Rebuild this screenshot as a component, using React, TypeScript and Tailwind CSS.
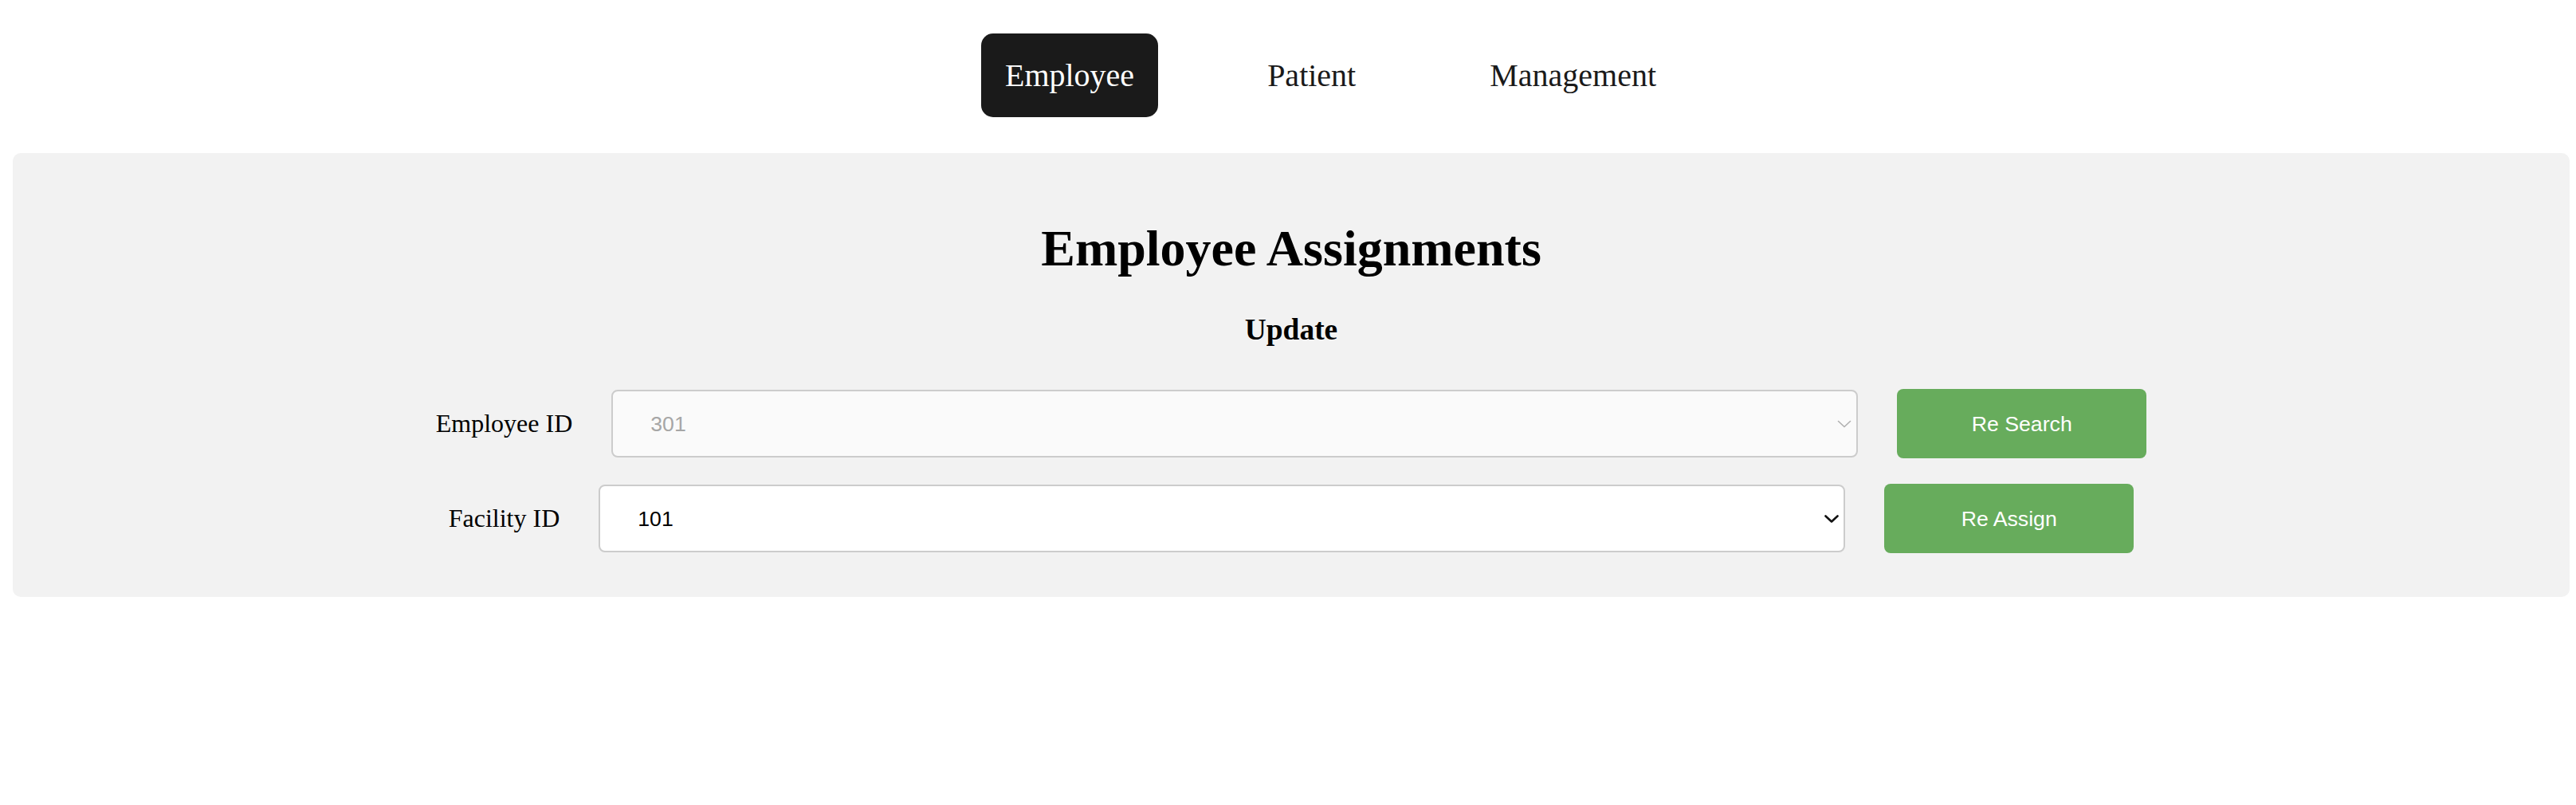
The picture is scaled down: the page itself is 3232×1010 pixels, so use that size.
import React from "react";

const serif = { fontFamily: '"Liberation Serif", "Times New Roman", serif' };

function Chevron({ disabled }: { disabled?: boolean }) {
  return (
    <svg
      className="pointer-events-none absolute right-[8px] top-1/2 -translate-y-1/2"
      width="18"
      height="12"
      viewBox="0 0 18 12"
      fill="none"
    >
      <path
        d="M1.5 2.5 L9 9.5 L16.5 2.5"
        stroke={disabled ? "#b0b0b0" : "#111111"}
        strokeWidth={disabled ? 1.6 : 2.6}
        strokeLinecap="round"
        strokeLinejoin="round"
      />
    </svg>
  );
}

function Row({
  label,
  value,
  disabled,
  button,
  className,
}: {
  label: string;
  value: string;
  disabled?: boolean;
  button: string;
  className: string;
}) {
  return (
    <div className={`flex w-full items-center justify-center gap-[49px] ${className}`}>
      <label className="shrink-0 -translate-y-[1px] text-[32px] text-black" style={serif}>
        {label}
      </label>
      <div className="relative w-1/2 shrink-0">
        <select
          disabled={disabled}
          defaultValue={value}
          className={`h-[85px] w-full appearance-none rounded-[8px] border-2 border-[#cccccc] pl-[47px] pr-[40px] text-[26.67px] outline-none ${
            disabled ? "bg-[#fafafa] text-[#a6a6a6]" : "bg-white text-black"
          }`}
          style={{ fontFamily: '"Liberation Sans", Arial, sans-serif' }}
        >
          <option value={value}>{value}</option>
        </select>
        <Chevron disabled={disabled} />
      </div>
      <button
        className="h-[87px] w-[313px] shrink-0 rounded-[8px] bg-[#67ac5c] text-[26.67px] text-white"
        style={{ fontFamily: '"Liberation Sans", Arial, sans-serif' }}
      >
        {button}
      </button>
    </div>
  );
}

export default function App() {
  return (
    <div className="min-h-[1010px] w-full bg-white">
      <nav className="flex justify-center pl-[107px] pt-[42px]" style={serif}>
        <a className="flex h-[105px] items-center rounded-[15px] bg-[#1a1a1a] px-[30px] text-[40px] text-white">
          Employee
        </a>
        <a className="ml-[107px] flex h-[105px] items-center px-[30px] text-[40px] text-[#1a1a1a]">
          Patient
        </a>
        <a className="ml-[108px] flex h-[105px] items-center px-[30px] text-[40px] text-[#1a1a1a]">
          Management
        </a>
      </nav>

      <section className="ml-[16px] mr-[8px] mt-[45px] flex flex-col items-center rounded-[10px] bg-[#f2f2f2] px-[40px] pb-[55px] pt-[40px]">
        <h1
          className="mt-[43px] text-[64px] font-bold leading-[74px] text-black"
          style={serif}
        >
          Employee Assignments
        </h1>
        <h3
          className="mt-[43px] text-[37.44px] font-bold leading-[43px] text-black"
          style={serif}
        >
          Update
        </h3>
        <Row
          className="mt-[53px]"
          label="Employee ID"
          value="301"
          disabled
          button="Re Search"
        />
        <Row
          className="mt-[32px]"
          label="Facility ID"
          value="101"
          button="Re Assign"
        />
      </section>
    </div>
  );
}
